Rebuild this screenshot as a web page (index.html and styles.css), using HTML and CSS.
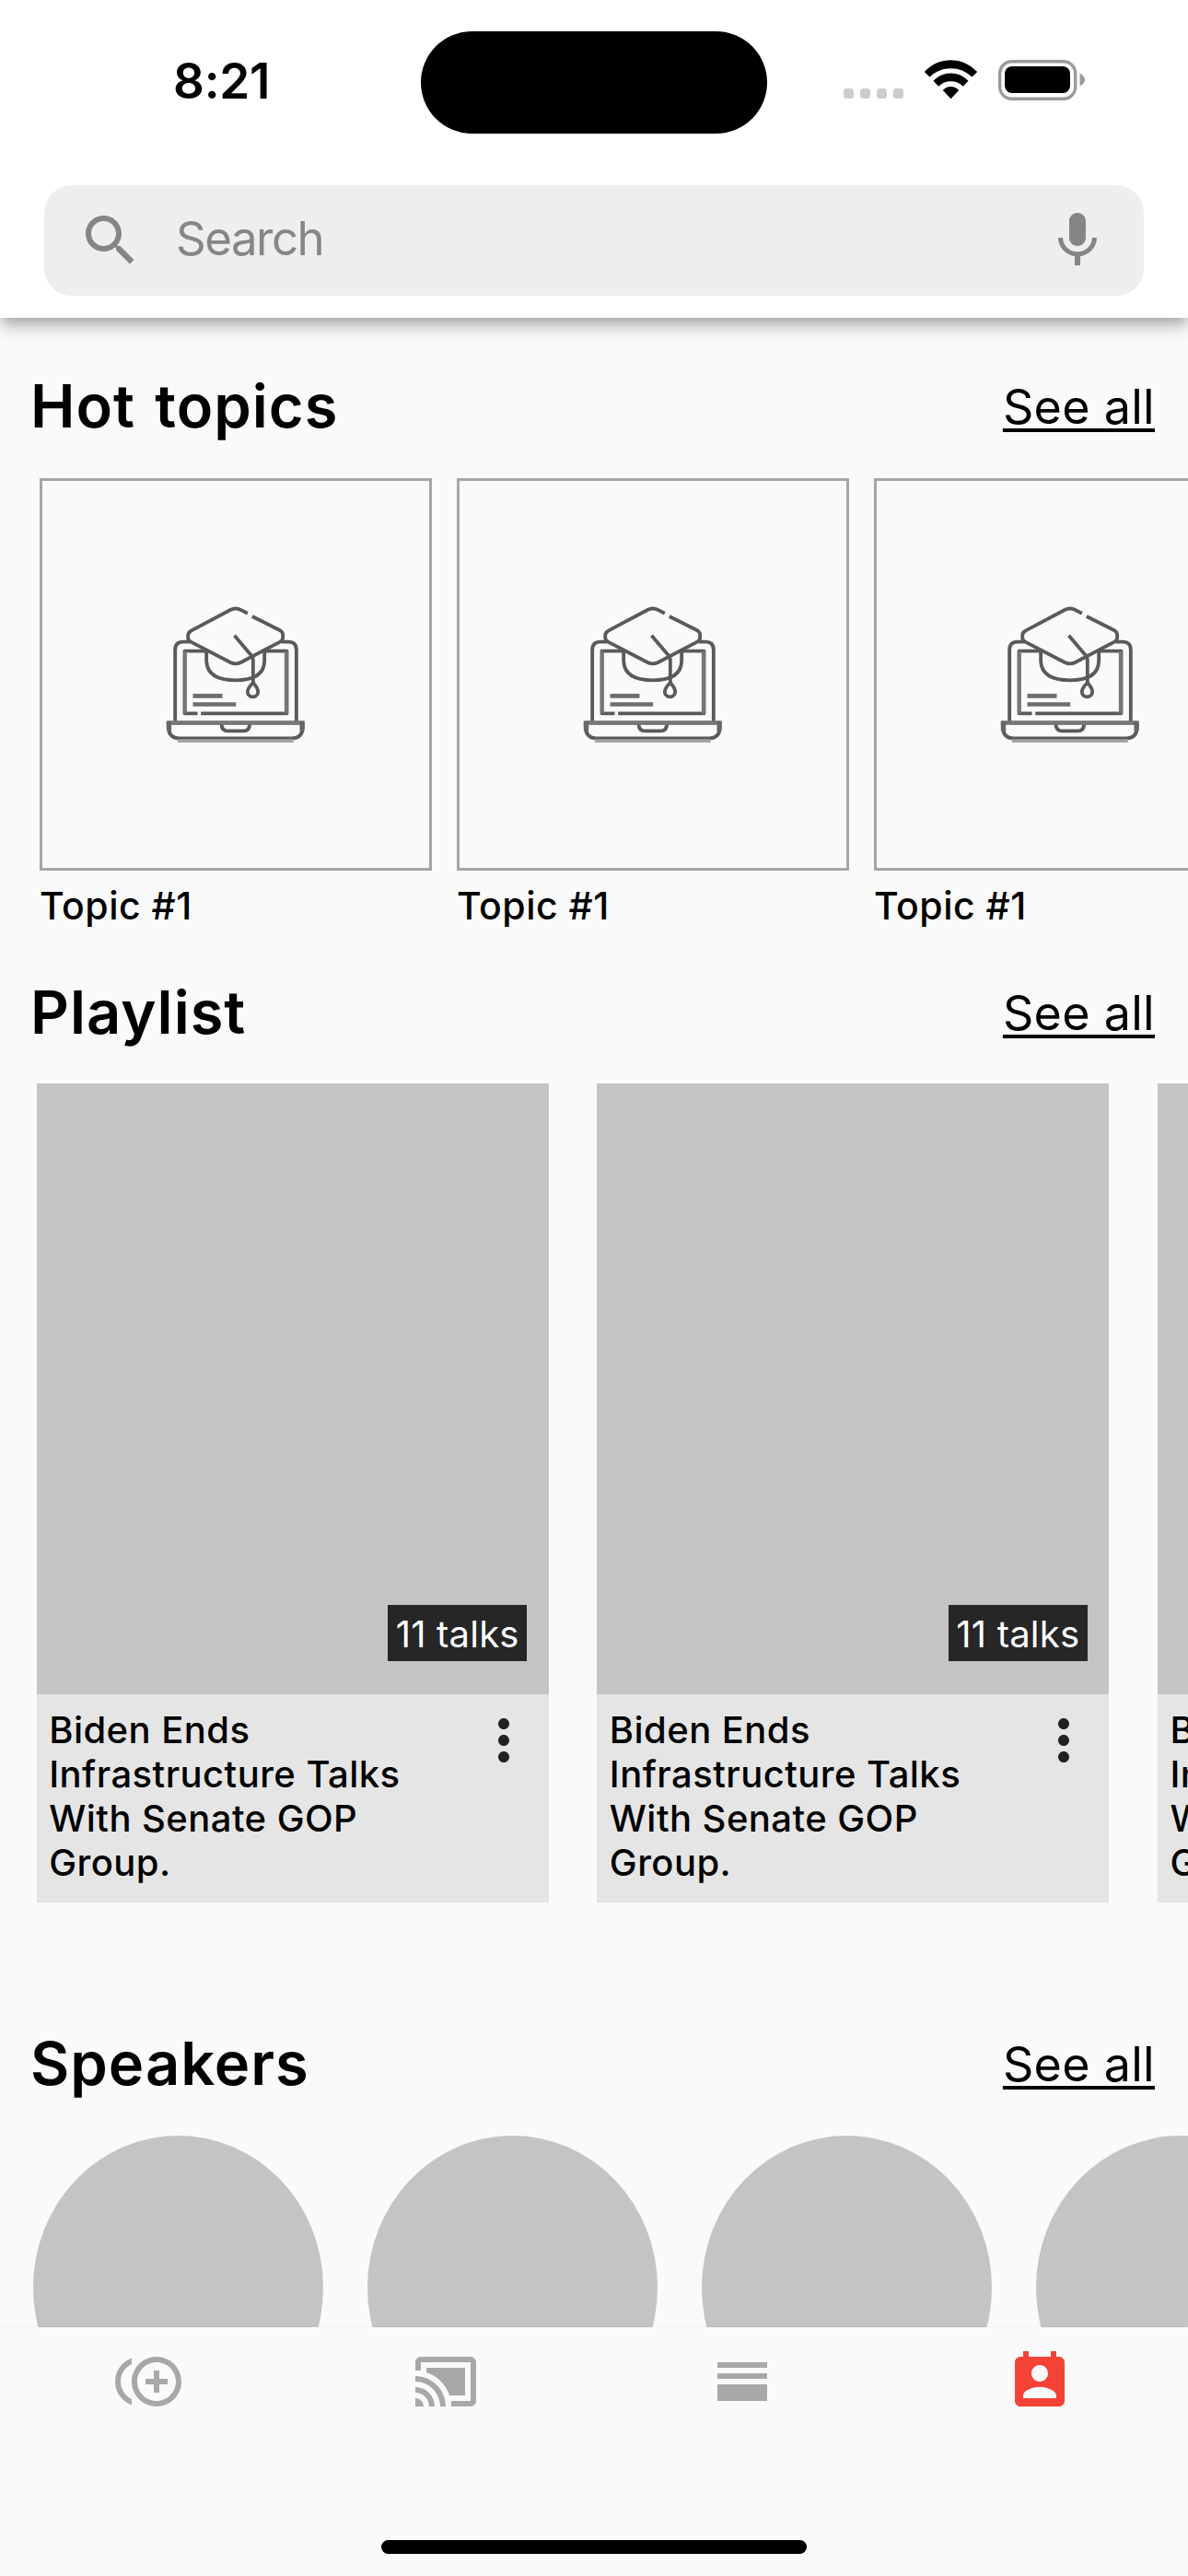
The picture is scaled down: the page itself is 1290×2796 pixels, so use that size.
FILE: index.html
```html
<!DOCTYPE html>
<html lang="en">
<head>
<meta charset="utf-8">
<title>Discover</title>
<link rel="stylesheet" href="styles.css">
</head>
<body>
<svg class="defs" aria-hidden="true">
  <symbol id="course" viewBox="4.5 -6 570 570">
    <g fill="none" stroke="#5a5a5a" stroke-width="11.500" stroke-linejoin="round">
      <path d="M328 80L306 69Q289 60 272 69L144 137Q134 142 134 153V158Q134 168 143 173L272 240Q289 248 306 240L434 173Q443 168 443 158V150Q443 141 434 136L343 90"/>
      <path d="M285 152L334 210Q346 220 346 234V308"/>
      <path d="M346 306Q362 324 362 335A17 17 0 0 1 328 335Q328 324 346 306Z"/>
      <path d="M194 204V236Q197 298 289 298Q381 298 383 236V204"/>
      <path d="M140 173H118Q92 173 92 199V432M439 173H462Q487 173 487 199V432"/>
      <path d="M200 203H123V406H165M378 203H456V406H176"/>
      <path d="M70 437V452Q72 487 105 487H473Q506 487 508 452V437Z"/>
      <path d="M243 440Q243 463 264 463H314Q335 463 335 440"/>
    </g>
    <path d="M64 430H513V443H64Z" fill="#777"/>
    <path d="M64 432H80V466L64 462ZM498 432H513V462L498 466Z" fill="#666"/>
    <path d="M150 342H246V356H150ZM150 370H290V383H150Z" fill="#6e6e6e"/>
    <path d="M100 490H478V501H100Z" fill="#a4a4a4"/>
    <path d="M448 204H460V406H448ZM119 204H130V406H119Z" fill="#777"/>
  </symbol>
  <symbol id="more" viewBox="0 0 24 24"><path d="M12 8c1.100 0 2-.9 2-2s-.9-2-2-2-2 .9-2 2 .9 2 2 2zm0 2c-1.100 0-2 .9-2 2s.9 2 2 2 2-.9 2-2-.9-2-2-2zm0 6c-1.100 0-2 .9-2 2s.9 2 2 2 2-.9 2-2-.9-2-2-2z"/></symbol>
</svg>
<div class="screen">
  <header class="header">
    <div class="status">
      <div class="time">8:21</div>
      <div class="island"></div>
      <svg class="indicators" width="264" height="44" viewBox="0 0 264 44">
        <g fill="#ccc"><rect x="1" y="31" width="11" height="11" rx="3.500"/><rect x="19" y="31" width="11" height="11" rx="3.500"/><rect x="37" y="31" width="11" height="11" rx="3.500"/><rect x="55" y="31" width="11" height="11" rx="3.500"/></g>
        <g transform="translate(117.500 0)">
          <path d="M0 42.300L-8.700 33Q-5 29 0 29T8.700 33Z"/>
          <path d="M-19 22.800Q-11 14.500 0 14.500T19 22.800L13.300 28.700Q7.500 23.300 0 23.300T-13.300 28.700Z"/>
          <path d="M-28.700 13Q-17 .2 0 .2T28.700 13L23 18.500Q13 9.200 0 9.200T-23 18.500Z"/>
        </g>
        <rect x="170.700" y="1.700" width="82" height="40.600" rx="13" fill="none" stroke="#9b9b9b" stroke-width="3.400"/>
        <rect x="176" y="7" width="71" height="29" rx="8"/>
        <path d="M257.500 14.500Q263 17.500 263 21.500T257.500 28.500Z" fill="#9b9b9b"/>
      </svg>
    </div>
    <div class="search">
      <svg class="icon" viewBox="0 0 24 24"><path d="M15.500 14h-.79l-.28-.27C15.410 12.590 16 11.110 16 9.500 16 5.910 13.090 3 9.500 3S3 5.910 3 9.500 5.910 16 9.500 16c1.610 0 3.090-.59 4.230-1.570l.27.28v.79l5 4.990L20.490 19l-4.990-5zm-6 0C7.010 14 5 11.990 5 9.500S7.010 5 9.500 5 14 7.010 14 9.500 11.990 14 9.500 14z"/></svg>
      <span class="placeholder">Search</span>
      <svg class="icon" viewBox="0 0 24 24"><path d="M12 14c1.660 0 2.990-1.340 2.990-3L15 5c0-1.660-1.340-3-3-3S9 3.340 9 5v6c0 1.660 1.340 3 3 3zm5.300-3c0 3-2.540 5.100-5.300 5.100S6.700 14 6.700 11H5c0 3.410 2.720 6.230 6 6.720V21h2v-3.280c3.280-.48 6-3.300 6-6.720h-1.700z"/></svg>
    </div>
  </header>

  <main class="content">
    <section class="section topics">
      <div class="heading"><h2>Hot topics</h2><a class="all">See all</a></div>
      <div class="row">
        <div class="topic"><div class="thumb"><svg><use href="#course"/></svg></div><p>Topic #1</p></div>
        <div class="topic"><div class="thumb"><svg><use href="#course"/></svg></div><p>Topic #1</p></div>
        <div class="topic"><div class="thumb"><svg><use href="#course"/></svg></div><p>Topic #1</p></div>
      </div>
    </section>

    <section class="section playlist">
      <div class="heading"><h2>Playlist</h2><a class="all">See all</a></div>
      <div class="row">
        <article class="card"><div class="cover"><span class="badge">11 talks</span></div><div class="info"><p>Biden Ends<br>Infrastructure Talks<br>With Senate GOP<br>Group.</p><svg class="more"><use href="#more"/></svg></div></article>
        <article class="card"><div class="cover"><span class="badge">11 talks</span></div><div class="info"><p>Biden Ends<br>Infrastructure Talks<br>With Senate GOP<br>Group.</p><svg class="more"><use href="#more"/></svg></div></article>
        <article class="card"><div class="cover"></div><div class="info"><p>Biden Ends<br>Infrastructure Talks<br>With Senate GOP<br>Group.</p></div></article>
      </div>
    </section>

    <section class="section speakers">
      <div class="heading"><h2>Speakers</h2><a class="all">See all</a></div>
      <div class="row">
        <div class="avatar"></div><div class="avatar"></div><div class="avatar"></div><div class="avatar"></div>
      </div>
    </section>
  </main>

  <nav class="nav">
    <div class="tabs">
      <svg viewBox="0 0 24 24"><path d="M16 8h-2v3h-3v2h3v3h2v-3h3v-2h-3V8zM2 12c0-2.790 1.640-5.200 4.010-6.320V3.520C2.520 4.760 0 8.090 0 12s2.520 7.240 6.010 8.480v-2.160C3.640 17.200 2 14.790 2 12zm13-9c-4.960 0-9 4.040-9 9s4.040 9 9 9 9-4.040 9-9-4.040-9-9-9zm0 16c-3.860 0-7-3.140-7-7s3.140-7 7-7 7 3.140 7 7-3.140 7-7 7z"/></svg>
      <svg viewBox="0 0 24 24"><path d="M1 18v3h3c0-1.660-1.340-3-3-3zm0-4v2c2.760 0 5 2.240 5 5h2c0-3.870-3.130-7-7-7zm18-7H5v1.630c3.960 1.280 7.090 4.410 8.370 8.370H19V7zM1 10v2c4.970 0 9 4.030 9 9h2c0-6.080-4.930-11-11-11zm20-7H3c-1.100 0-2 .9-2 2v3h2V5h18v14h-7v2h7c1.100 0 2-.9 2-2V5c0-1.100-.9-2-2-2z"/></svg>
      <svg viewBox="0 0 24 24"><path d="M3 5h18v2H3zM3 9h18v2H3zM3 13h18v6H3z"/></svg>
      <svg class="active" viewBox="0 0 24 24"><path d="M19 3h-1V1h-2v2H8V1H6v2H5c-1.110 0-2 .9-2 2v14c0 1.100.89 2 2 2h14c1.100 0 2-.9 2-2V5c0-1.100-.9-2-2-2zm-7 3c1.660 0 3 1.340 3 3s-1.340 3-3 3-3-1.340-3-3 1.340-3 3-3zm6 12H6v-1c0-2 4-3.100 6-3.100s6 1.100 6 3.100v1z"/></svg>
    </div>
    <div class="home"></div>
  </nav>
</div>
</body>
</html>
```
FILE: styles.css
```css
* { box-sizing: border-box; margin: 0; padding: 0; }
body { width: 1290px; height: 2796px; overflow: hidden; background: #fafafa; font-family: Inter, "Liberation Sans", sans-serif; color: #000; }
.defs { position: absolute; width: 0; height: 0; }
.screen { display: flex; flex-direction: column; width: 1290px; height: 2796px; overflow: hidden; }

.header { position: relative; z-index: 1; flex: none; height: 345px; background: #fff; box-shadow: 0 6px 12px -3px rgba(0,0,0,.2), 0 12px 15px rgba(0,0,0,.14), 0 3px 30px rgba(0,0,0,.08); }
.status { display: grid; grid-template-columns: 457px 376px 1fr; height: 201px; padding-top: 33px; align-items: start; }
.time { padding: 23px 0 0 188px; font-size: 53px; line-height: 64px; font-weight: 600; letter-spacing: -.3px; }
.island { height: 111px; margin-top: .5px; border-radius: 56px; background: #000; }
.indicators { margin: 32px 0 0 82px; }
.search { display: flex; align-items: center; height: 120px; margin: 0 48px; padding: 0 36px; border-radius: 30px; background: #eee; }
.icon { width: 72px; height: 72px; fill: #858585; }
.placeholder { flex: 1; padding: 0 0 5px 35px; font-size: 51px; line-height: 60px; letter-spacing: -1.500px; color: #86868a; }

.content { flex: 1; min-height: 0; overflow: hidden; }
.heading { display: flex; align-items: center; justify-content: space-between; height: 84px; padding: 0 36px 0 33px; }
h2 { font-size: 65px; line-height: 84px; font-weight: 600; letter-spacing: 1px; word-spacing: 4px; }
.all { padding-top: 1px; font-size: 52px; line-height: 64px; letter-spacing: .3px; text-decoration: underline; text-decoration-thickness: 3.500px; text-underline-offset: 5px; text-decoration-skip-ink: none; }
.row { display: flex; }

.topics { padding-top: 54px; }
.topics .row { padding: 36px 0 0 43px; gap: 27px; }
.topic { flex: none; width: 426px; }
.thumb { display: flex; align-items: center; justify-content: center; height: 426px; border: 3px solid #a6a6a6; }
.thumb svg { width: 190px; height: 190px; }
.topic p { padding: 13px 0 0; font-size: 41px; line-height: 50px; font-weight: 500; letter-spacing: .5px; }

.playlist { padding-top: 49px; }
.playlist .row { padding: 35px 0 0 39.700px; gap: 52.600px; }
.card { flex: none; width: 556px; }
.cover { display: flex; align-items: flex-end; justify-content: flex-end; height: 663px; padding: 0 23.500px 36px 0; background: #c4c4c4; }
.badge { width: 151px; height: 61px; background: #262626; color: #fff; text-align: center; font-size: 40px; line-height: 63px; letter-spacing: .2px; }
.info { display: flex; justify-content: space-between; height: 225.500px; padding: 15px 13px 0 13.500px; background: #e5e5e5; }
.info p { font-size: 40px; line-height: 48px; font-weight: 500; letter-spacing: .45px; white-space: nowrap; }
.more { width: 72px; height: 72px; margin-top: -1px; fill: #212121; }

.speakers { padding-top: 133.500px; }
.speakers .row { padding: 36px 0 0 36.400px; gap: 48px; }
.avatar { flex: none; width: 315px; height: 330px; border-radius: 50%; background: #c4c4c4; }

.nav { position: relative; z-index: 1; display: flex; flex-direction: column; justify-content: space-between; align-items: center; flex: none; height: 270px; padding: 23px 0 24px; background: #fafafa; box-shadow: 0 -1px 4px rgba(0,0,0,.03); }
.tabs { display: grid; grid-template-columns: repeat(4, 322.500px); justify-items: center; }
.tabs svg { width: 72px; height: 72px; fill: #a8a8a8; }
.tabs .active { fill: #f44336; }
.home { width: 462px; height: 15px; border-radius: 8px; background: #000; }
```
